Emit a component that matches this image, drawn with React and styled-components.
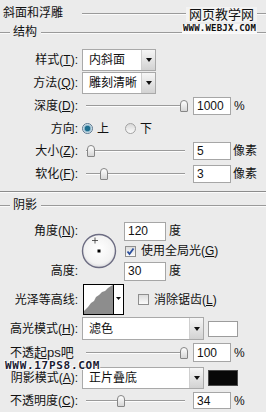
import React from "react";
import styled, { createGlobalStyle } from "styled-components";

const GlobalStyle = createGlobalStyle`
  html, body {
    margin: 0;
    padding: 0;
    background: #ebebeb;
  }
`;

const Page = styled.div`
  position: relative;
  width: 266px;
  height: 412px;
  overflow: hidden;
  background: #ebebeb;
  font-family: "Liberation Sans", "Noto Sans CJK SC", sans-serif;
  font-size: 12px;
  line-height: 1;
  color: #111;
  display: flex;
  flex-direction: column;
`;

const TitleRow = styled.div`
  height: 26px;
  display: flex;
  align-items: center;
  padding-left: 3px;
`;

const TitleText = styled.span`
  width: 79px;
  flex-shrink: 0;
`;

const Rule = styled.div`
  height: 1px;
  background: #9a9a9a;
  box-shadow: 0 1px 0 #fafafa;
  flex: ${(p) => (p.$w ? "none" : "1")};
  width: ${(p) => (p.$w ? `${p.$w}px` : "auto")};
`;

const SectionHead = styled.div`
  height: 12px;
  margin-top: ${(p) => p.$mt || 0}px;
  display: flex;
  align-items: center;
  span {
    margin: 0 4px 0 3px;
  }
`;

const Separator = styled.div`
  margin-top: 7px;
  height: 1px;
  background: #8c8c8c;
  box-shadow: 0 1px 0 #fbfbfb;
`;

const Row = styled.div`
  height: ${(p) => p.$h}px;
  margin-top: ${(p) => p.$mt || 0}px;
  display: flex;
  align-items: center;
  flex-shrink: 0;
`;

const Label = styled.span`
  width: 78px;
  flex-shrink: 0;
  margin-right: 4px;
  text-align: right;
  white-space: nowrap;
`;

const WatermarkLabel = styled.span`
  width: 78px;
  flex-shrink: 0;
  margin-right: 4px;
  padding-left: 10px;
  box-sizing: border-box;
  display: flex;
  align-items: center;
  white-space: nowrap;
  span {
    font-size: 13px;
    color: #1a1a1a;
  }
`;

const SelectBox = styled.div`
  box-sizing: border-box;
  width: ${(p) => p.$w}px;
  height: ${(p) => p.$h}px;
  border: 1px solid #a9a9a9;
  background: #fff;
  display: flex;
`;

const SelectText = styled.span`
  flex: 1;
  display: flex;
  align-items: center;
  padding-left: 6px;
`;

const SelectBtn = styled.span`
  width: 13px;
  border-left: 1px solid #cfcfcf;
  background: linear-gradient(#f6f6f6, #d2d2d2);
  display: flex;
  align-items: center;
  justify-content: center;
  &::after {
    content: "";
    border-left: 3px solid transparent;
    border-right: 3px solid transparent;
    border-top: 4px solid #111;
  }
`;

const Swatch = styled.div`
  box-sizing: border-box;
  width: 30px;
  height: 16px;
  margin-left: 4px;
  background: ${(p) => p.$color};
  border: 1px solid ${(p) => (p.$color === "#fff" ? "#9c9c9c" : "#4a4a4a")};
`;

const SliderTrack = styled.div`
  position: relative;
  width: 111px;
  height: 14px;
  flex-shrink: 0;
  &::before {
    content: "";
    position: absolute;
    left: 4px;
    right: 8px;
    top: 6px;
    height: 1px;
    background: #9a9a9a;
    box-shadow: 0 1px 0 #fdfdfd;
  }
`;

const Thumb = styled.span`
  position: absolute;
  top: 1px;
  left: ${(p) => p.$pos}px;
  box-sizing: border-box;
  width: 8px;
  height: 12px;
  border: 1px solid #868686;
  border-radius: 4px 4px 1px 1px;
  background: linear-gradient(#ffffff, #d6d6d6);
`;

const NumInput = styled.div`
  box-sizing: border-box;
  width: ${(p) => p.$w || 38}px;
  height: ${(p) => p.$h || 18}px;
  border: 1px solid #a6a6a6;
  background: #fff;
  padding-left: 3px;
  display: flex;
  align-items: center;
  font-size: 12px;
  flex-shrink: 0;
`;

const Unit = styled.span`
  margin-left: ${(p) => p.$ml || 2}px;
  white-space: nowrap;
`;

const Radio = styled.span`
  box-sizing: border-box;
  width: 11px;
  height: 11px;
  border-radius: 50%;
  border: 1px solid ${(p) => (p.$on ? "#5a7890" : "#a2a2a2")};
  background: ${(p) =>
    p.$on
      ? "radial-gradient(circle at 50% 50%, #1f6f8f 0 2.5px, #7fb0c6 3px, #e8eef2 4.5px)"
      : "linear-gradient(#d8d8d8, #fafafa)"};
  flex-shrink: 0;
`;

const RadioText = styled.span`
  margin-left: 4px;
  margin-right: ${(p) => p.$mr || 0}px;
`;

const CheckBox = styled.span`
  box-sizing: border-box;
  width: 11px;
  height: 11px;
  border: 1px solid #8e8e8e;
  background: linear-gradient(#dcdcdc, #fbfbfb);
  margin-left: ${(p) => p.$ml || 0}px;
  display: flex;
  align-items: center;
  justify-content: center;
  flex-shrink: 0;
`;

const CheckText = styled.span`
  margin-left: 5px;
  white-space: nowrap;
`;

const AngleGrid = styled.div`
  margin-top: 10px;
  display: grid;
  grid-template-columns: 78px 46px auto;
  grid-template-rows: 20px 20px 20px;
  align-items: center;
`;

const GridLabel = styled.span`
  grid-column: 1;
  grid-row: ${(p) => p.$row};
  text-align: right;
  white-space: nowrap;
`;

const DialCell = styled.div`
  grid-column: 2;
  grid-row: 1 / 4;
  display: flex;
  justify-content: center;
  padding-right: 5px;
`;

const GridControl = styled.div`
  grid-column: 3;
  grid-row: ${(p) => p.$row};
  display: flex;
  align-items: center;
  padding-left: ${(p) => p.$pl || 0}px;
`;

const ContourBox = styled.div`
  margin-left: 1px;
  width: 41px;
  height: 31px;
  flex-shrink: 0;
  display: flex;
`;

const Stamp = styled.div`
  position: absolute;
  left: ${(p) => p.$x}px;
  top: ${(p) => p.$y}px;
  white-space: nowrap;
`;

const StampCn = styled.div`
  background: #f3f3f3;
  font-size: 13px;
  padding: 1px 3px;
  margin-left: 4px;
  color: #111;
`;

const StampUrl = styled.div`
  margin-top: 2px;
  background: #f7f7f7;
  font-family: "DejaVu Sans Mono", monospace;
  font-weight: bold;
  font-size: 9px;
  letter-spacing: 0.2px;
  color: #0e0e0e;
  padding: 0 1px;
`;

const StampUrl2 = styled.div`
  font-family: "DejaVu Sans Mono", monospace;
  font-weight: bold;
  font-size: 11px;
  line-height: 9px;
  letter-spacing: 0.7px;
  color: #1b1b33;
  text-shadow: 0 0 1px #fff, 1px 1px 0 #fff, -1px -1px 0 #fff;
`;

const Select = ({ w, h = 22, value }) => (
  <SelectBox $w={w} $h={h}>
    <SelectText>{value}</SelectText>
    <SelectBtn />
  </SelectBox>
);

const Slider = ({ pos }) => (
  <SliderTrack>
    <Thumb $pos={pos} />
  </SliderTrack>
);

const Tick = () => (
  <svg width="9" height="9" viewBox="0 0 9 9">
    <path d="M1.5 4.5 L3.5 7 L7.5 1.5" fill="none" stroke="#2b4f9e" strokeWidth="1.8" />
  </svg>
);

const Dial = () => (
  <svg width="36" height="36" viewBox="0 0 36 36">
    <defs>
      <radialGradient id="dialFill" cx="50%" cy="45%" r="55%">
        <stop offset="0%" stopColor="#ffffff" />
        <stop offset="80%" stopColor="#f2f2f2" />
        <stop offset="100%" stopColor="#d8d8dc" />
      </radialGradient>
    </defs>
    <circle cx="18" cy="18" r="16.5" fill="url(#dialFill)" stroke="#6c6c82" strokeWidth="1.4" />
    <path d="M14 4.5 V10.5 M11 7.5 H17" stroke="#333" strokeWidth="0.8" />
    <rect x="16.5" y="16.5" width="3" height="3" fill="#000" />
  </svg>
);

const Contour = () => (
  <svg width="41" height="31" viewBox="0 0 41 31">
    <rect x="0.5" y="0.5" width="40" height="30" fill="#fff" stroke="#000" />
    <polygon
      points="1,30 1,27 5,23 8,19 11,17 13,13 16,11 19,8 22,7 25,4 28,2 30,1 30,30"
      fill="#8d8d8d"
    />
    <line x1="30.5" y1="0.5" x2="30.5" y2="30.5" stroke="#000" />
    <polygon points="33,13 38,13 35.5,16" fill="#111" />
  </svg>
);

export default function App() {
  return (
    <>
      <GlobalStyle />
      <Page>
        <TitleRow>
          <TitleText>斜面和浮雕</TitleText>
          <Rule />
        </TitleRow>
        <SectionHead>
          <Rule $w={10} />
          <span>结构</span>
          <Rule />
        </SectionHead>

        <Row $h={23} $mt={10}>
          <Label>
            样式(<u>T</u>):
          </Label>
          <Select w={74} h={22} value="内斜面" />
        </Row>
        <Row $h={23}>
          <Label>
            方法(<u>Q</u>):
          </Label>
          <Select w={74} h={22} value="雕刻清晰" />
        </Row>
        <Row $h={24}>
          <Label>
            深度(<u>D</u>):
          </Label>
          <Slider pos={98} />
          <NumInput>1000</NumInput>
          <Unit $ml={3}>%</Unit>
        </Row>
        <Row $h={21}>
          <Label>方向:</Label>
          <Radio $on />
          <RadioText $mr={16}>上</RadioText>
          <Radio />
          <RadioText>下</RadioText>
        </Row>
        <Row $h={24}>
          <Label>
            大小(<u>Z</u>):
          </Label>
          <Slider pos={5} />
          <NumInput>5</NumInput>
          <Unit $ml={2}>像素</Unit>
        </Row>
        <Row $h={21}>
          <Label>
            软化(<u>F</u>):
          </Label>
          <Slider pos={18} />
          <NumInput>3</NumInput>
          <Unit $ml={2}>像素</Unit>
        </Row>

        <Separator />
        <SectionHead $mt={7}>
          <Rule $w={10} />
          <span>阴影</span>
          <Rule />
        </SectionHead>

        <AngleGrid>
          <GridLabel $row={1}>
            角度(<u>N</u>):
          </GridLabel>
          <DialCell>
            <Dial />
          </DialCell>
          <GridControl $row={1}>
            <NumInput $w={42} $h={19}>
              120
            </NumInput>
            <Unit $ml={3}>度</Unit>
          </GridControl>
          <GridControl $row={2} $pl={1}>
            <CheckBox>
              <Tick />
            </CheckBox>
            <CheckText>
              使用全局光(<u>G</u>)
            </CheckText>
          </GridControl>
          <GridLabel $row={3}>高度:</GridLabel>
          <GridControl $row={3}>
            <NumInput $w={42} $h={19}>
              30
            </NumInput>
            <Unit $ml={3}>度</Unit>
          </GridControl>
        </AngleGrid>

        <Row $h={31} $mt={3}>
          <Label>光泽等高线:</Label>
          <ContourBox>
            <Contour />
          </ContourBox>
          <CheckBox $ml={14} />
          <CheckText>
            消除锯齿(<u>L</u>)
          </CheckText>
        </Row>
        <Row $h={25} $mt={1}>
          <Label>
            高光模式(<u>H</u>):
          </Label>
          <Select w={122} h={23} value="滤色" />
          <Swatch $color="#fff" />
        </Row>
        <Row $h={23}>
          <WatermarkLabel>
            不透<span>起ps吧</span>
          </WatermarkLabel>
          <Slider pos={98} />
          <NumInput $h={19}>100</NumInput>
          <Unit $ml={3}>%</Unit>
        </Row>
        <Row $h={27}>
          <Label>
            阴影模式(<u>A</u>):
          </Label>
          <Select w={122} h={22} value="正片叠底" />
          <Swatch $color="#080808" />
        </Row>
        <Row $h={19}>
          <Label>
            不透明度(<u>C</u>):
          </Label>
          <Slider pos={35} />
          <NumInput $h={17}>34</NumInput>
          <Unit $ml={3}>%</Unit>
        </Row>

        <Stamp $x={5} $y={361}>
          <StampUrl2>WWW.17PS8.COM</StampUrl2>
        </Stamp>
        <Stamp $x={182} $y={7}>
          <StampCn>网页教学网</StampCn>
          <StampUrl>WWW.WEBJX.COM</StampUrl>
        </Stamp>
      </Page>
    </>
  );
}
